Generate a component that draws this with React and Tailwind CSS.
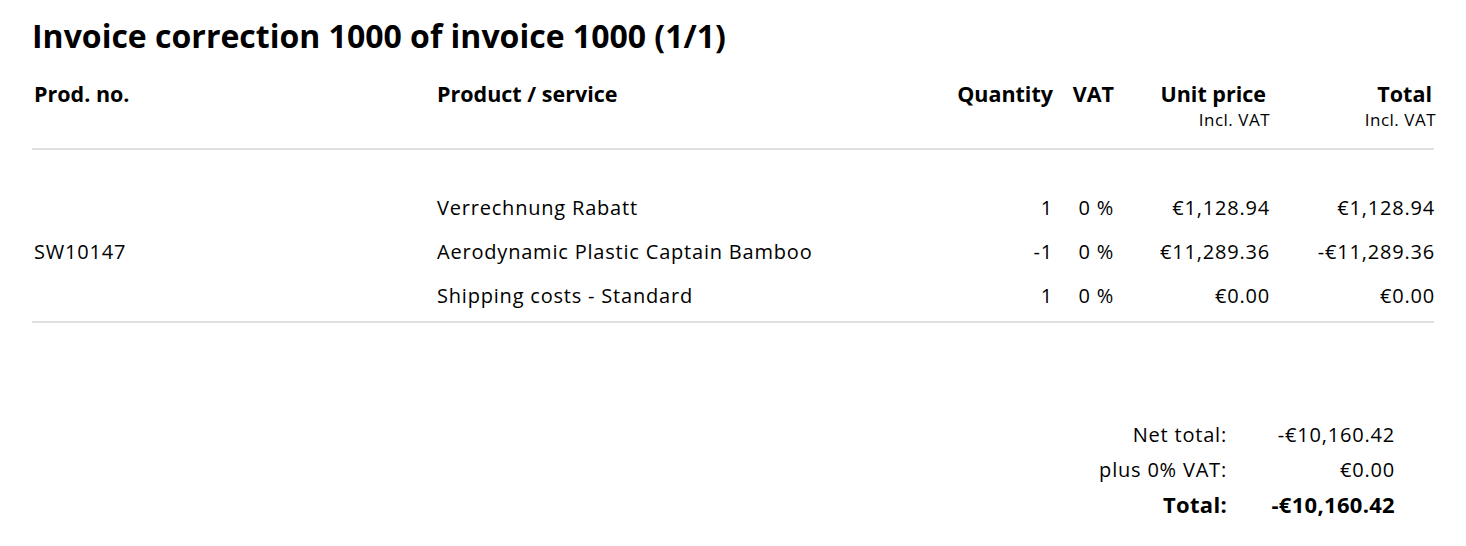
const rows = [
  { no: '', name: 'Verrechnung Rabatt', qty: '1', vat: '0 %', unit: '€1,128.94', total: '€1,128.94' },
  { no: 'SW10147', name: 'Aerodynamic Plastic Captain Bamboo', qty: '-1', vat: '0 %', unit: '€11,289.36', total: '-€11,289.36' },
  { no: '', name: 'Shipping costs - Standard', qty: '1', vat: '0 %', unit: '€0.00', total: '€0.00' },
];

const cols = 'grid grid-cols-[405px_516px_100px_61px_156px_166px]';

export default function App() {
  return (
    <div
      className="w-[1466px] h-[546px] bg-white text-black px-[32px] pt-[20px]"
      style={{ fontFamily: "'Open Sans', sans-serif" }}
    >
      <h1 className="text-[32px] leading-[32px] font-bold">Invoice correction 1000 of invoice 1000 (1/1)</h1>

      <div className={`${cols} mt-[28px] pb-[18px] border-b-2 border-[#e0e0e0] font-bold text-[21.5px] leading-[28px]`}>
        <div className="pl-[2px]">Prod. no.</div>
        <div>Product / service</div>
        <div className="text-right">Quantity</div>
        <div className="text-right">VAT</div>
        <div className="text-right">
          <div className="pr-[4px]">Unit price</div>
          <div className="mt-[2px] text-[17px] leading-[20px] font-normal tracking-[0.5px]">Incl. VAT</div>
        </div>
        <div className="text-right">
          <div className="pr-[4px]">Total</div>
          <div className="mt-[2px] text-[17px] leading-[20px] font-normal tracking-[0.5px]">Incl. VAT</div>
        </div>
      </div>

      <div className="pt-[36px] pb-[3px] border-b-2 border-[#e0e0e0] text-[20px] tracking-[0.8px]">
        {rows.map((r, i) => (
          <div key={i} className={`${cols} h-[44px] items-center`}>
            <div className="pl-[2px]">{r.no}</div>
            <div>{r.name}</div>
            <div className="text-right">{r.qty}</div>
            <div className="text-right">{r.vat}</div>
            <div className="text-right">{r.unit}</div>
            <div className="text-right pr-[1px]">{r.total}</div>
          </div>
        ))}
      </div>

      <div className="flex justify-end pr-[39px] pt-[94px] text-[20px] tracking-[0.8px]">
        <div className="grid grid-cols-[auto_168px] auto-rows-[35px] items-center text-right">
          <div>Net total:</div>
          <div>-€10,160.42</div>
          <div>plus 0% VAT:</div>
          <div>€0.00</div>
          <div className="font-bold text-[22px] tracking-[0.3px]">Total:</div>
          <div className="font-bold text-[22px] tracking-[0.3px]">-€10,160.42</div>
        </div>
      </div>
    </div>
  );
}
